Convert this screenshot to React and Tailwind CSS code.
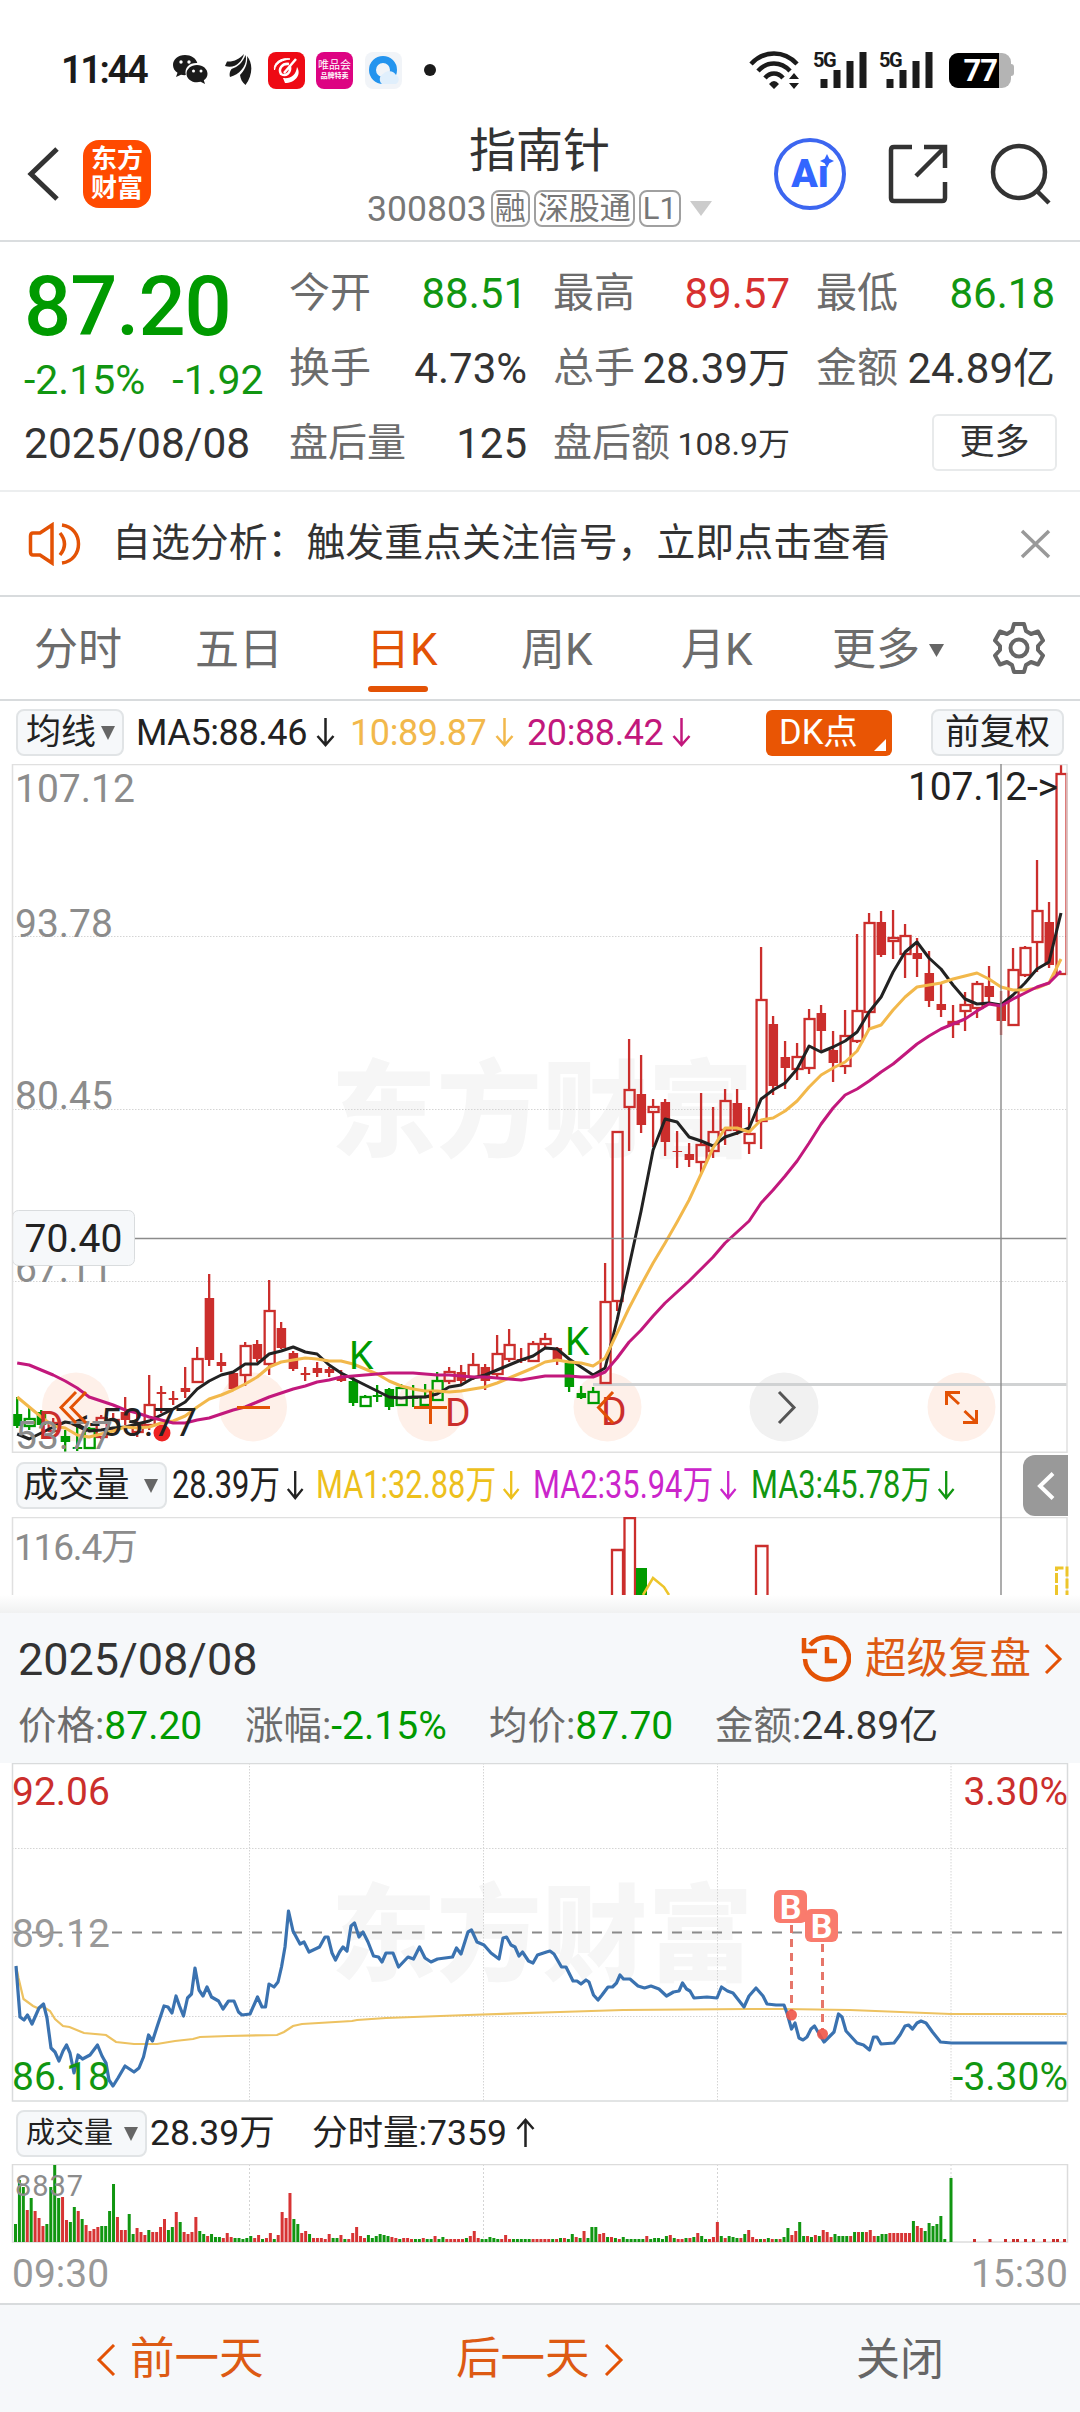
import React from 'react';

const RED = '#cb2e2c';
const GREEN = '#009a00';
const ORANGE = '#e35205';

// [high, bodyTop, bodyBottom, low, type]
// r = filled red, h = hollow red, g = filled green, G = hollow green
const candles = [
  [633, 650, 662, 664, 'g'], [643, 654, 662, 666, 'G'], [646, 648, 661, 663, 'g'], [654, 658, 667, 669, 'h'],
  [666, 672, 678, 690, 'g'], [663, 683, 685, 687, 'g'], [663, 664, 684, 685, 'G'], [651, 653, 673, 675, 'h'],
  [649, 655, 665, 666, 'h'], [633, 648, 656, 661, 'r'], [649, 660, 668, 673, 'h'], [611, 640, 661, 666, 'h'],
  [622, 628, 630, 649, 'r'], [627, 634, 636, 641, 'r'], [603, 624, 628, 634, 'r'], [583, 594, 618, 618, 'h'],
  [510, 534, 596, 602, 'r'], [589, 598, 602, 608, 'r'], [609, 609, 625, 625, 'r'], [578, 581, 611, 622, 'h'],
  [576, 580, 595, 598, 'r'], [516, 546, 600, 611, 'h'], [558, 564, 584, 585, 'r'], [587, 589, 605, 607, 'r'],
  [603, 609, 611, 617, 'r'], [598, 604, 609, 613, 'r'], [603, 605, 609, 613, 'r'], [606, 613, 617, 618, 'r'],
  [611, 617, 639, 642, 'g'], [631, 632, 642, 643, 'G'], [621, 631, 633, 638, 'g'], [624, 625, 643, 646, 'g'],
  [620, 623, 641, 642, 'G'], [621, 633, 635, 643, 'g'], [620, 632, 641, 643, 'G'], [608, 616, 636, 637, 'G'],
  [603, 607, 617, 620, 'h'], [601, 608, 617, 620, 'r'], [589, 600, 613, 616, 'h'], [600, 603, 617, 626, 'r'],
  [571, 589, 610, 613, 'h'], [565, 580, 595, 598, 'h'], [584, 595, 597, 599, 'r'], [577, 579, 597, 598, 'h'],
  [569, 574, 580, 583, 'h'], [583, 584, 596, 601, 'r'], [596, 599, 623, 628, 'g'], [622, 629, 634, 635, 'g'],
  [623, 627, 639, 640, 'G'], [499, 537, 619, 619, 'h'], [367, 367, 537, 547, 'h'], [275, 325, 343, 387, 'h'],
  [291, 330, 361, 369, 'r'], [335, 342, 348, 383, 'h'], [335, 338, 378, 392, 'r'], [367, 387, 388, 404, 'r'],
  [379, 390, 396, 403, 'r'], [329, 380, 398, 409, 'h'], [343, 367, 387, 394, 'h'], [325, 336, 366, 381, 'h'],
  [325, 339, 367, 371, 'r'], [343, 369, 379, 390, 'h'], [183, 235, 357, 385, 'h'], [252, 260, 322, 331, 'r'],
  [277, 293, 304, 325, 'r'], [279, 292, 305, 316, 'h'], [245, 254, 304, 310, 'h'], [241, 249, 267, 286, 'r'],
  [267, 286, 299, 318, 'r'], [246, 271, 302, 310, 'h'], [170, 246, 277, 279, 'h'], [149, 158, 248, 266, 'h'],
  [147, 158, 191, 193, 'r'], [146, 173, 177, 195, 'h'], [160, 171, 190, 214, 'h'], [174, 189, 195, 213, 'r'],
  [187, 209, 237, 243, 'r'], [219, 240, 246, 253, 'r'], [241, 257, 260, 274, 'h'], [228, 240, 247, 267, 'h'],
  [217, 219, 244, 254, 'h'], [202, 222, 233, 239, 'r'], [227, 241, 257, 271, 'r'], [184, 205, 261, 262, 'h'],
  [182, 183, 211, 213, 'h'], [96, 146, 178, 208, 'h'], [138, 158, 201, 204, 'r'], [0, 9, 210, 210, 'h'],
];

const ma5 = [
  670, 675, 669, 663, 658, 660, 667, 666, 664, 663, 660, 657, 651, 645, 638, 625, 617, 611, 608, 600, 600, 590, 587, 583, 588, 590, 601, 609, 615, 621,
  627, 633, 634, 633, 633, 630, 623, 621, 614, 611, 606, 601, 596, 592, 584, 585, 595, 603, 611, 604, 556, 502, 447, 386, 355, 358, 373, 377, 382, 373,
  369, 364, 335, 326, 319, 305, 282, 288, 283, 277, 268, 248, 233, 208, 188, 178, 194, 205, 221, 235, 240, 239, 241, 231, 219, 205, 198, 149,
];
const ma10 = [
  633, 643, 653, 662, 664, 671, 673, 670, 667, 663, 664, 663, 659, 657, 652, 643, 635, 631, 626, 620, 613, 603, 598, 596, 594, 595, 597, 597, 600, 605,
  610, 617, 622, 625, 627, 627, 628, 627, 625, 623, 619, 614, 609, 604, 598, 596, 598, 599, 602, 594, 569, 544, 521, 499, 479, 458, 436, 410, 384, 364,
  364, 368, 356, 354, 347, 337, 323, 311, 304, 298, 287, 265, 261, 246, 233, 223, 221, 219, 215, 212, 209, 215, 223, 226, 226, 224, 219, 195,
];
const ma20 = [
  599, 601, 606, 611, 617, 624, 633, 637, 641, 646, 649, 653, 656, 659, 659, 656, 654, 650, 646, 643, 638, 633, 629, 625, 622, 618, 616, 613, 612, 611,
  610, 609, 609, 609, 610, 611, 611, 612, 613, 613, 614, 615, 616, 614, 612, 612, 612, 613, 613, 608, 594, 578, 566, 552, 539, 528, 517, 505, 493, 479,
  468, 457, 439, 426, 412, 397, 379, 360, 344, 331, 325, 317, 308, 300, 290, 280, 272, 265, 260, 255, 247, 240, 242, 235, 229, 223, 219, 207,
];

const cx = (i) => 17.2 + i * 11.998;
const maPoints = (list) => list.map((y, i) => `${cx(i).toFixed(1)},${y}`).join(' ');

const pricePoints =
  '16,203 20,254 24,257 27.5,252 32,261 39,245 43.5,241 47,255 51,285 55,289 59,298 63,288 66.5,282 70,290 74,310 78,292 82.5,296 90,292 97.5,282 102,293 106,300 109,317 113,323 118,315 125,303 134,309 139,305 143.5,294 148.5,272 152.5,278 157,264 164,243 168,244 172,250 176,233 179.5,243 183.5,253 187.5,235 191.5,231 195,205 199,227 203,233 207,224 211.5,234 218.5,238 223,246 228.5,238 234,238 238.5,249 242,252 250,251 257.5,234 262,244 265.5,244 269,221 274,224 278,219 281.5,204 285,184 288.5,148 293,168 300,181 304,179 309,189 319.5,184 325,174 328,174 332,190 335.5,197 339.5,189 343,184 347,188 351,163 354.5,160 359,174 363,169 368,179 373.5,193 378.5,194 382,199 386,190 393,190 398.5,204 408,194 413.5,196 419.5,184 425,195 431,199 437.5,196 452.5,194 456.5,185 461,191 468,169 471.5,167 477,179 484,182 491,190 499,196 503,175 506.5,174 511,182 515,184 519,193 522.5,189 528.5,198 533,200 537.5,192 546.5,189 550,188 554,191 561.5,204 566,204 573,218 577,218 581,221 586,217 589,219 593.5,232 598,237 602,232 608,224 612.5,224 616.5,220 620,212 623.5,216 630,216 638,223 644.5,225 651,223 659,226 666.5,233 673.5,229 679,228 682.5,220 686.5,226 690,228 694,235 707,234 717,235 721.5,224 727.5,228 733,230 744,244 749,233 756,225 763,233 767,241 776,242 784,242 787,250 791.5,266 795,260 799,275 803,277 807,274 811,266 814.5,263 818,269 824,279 829,274 834,269 838.5,251 842,254 846,268 851.5,274 857,280 863.5,282 869.5,287 873.5,274 877,274 881,281 894,280 900,272 905,263 908.5,262 912.5,266 917,260 921,258 926,260 932.5,269 940.5,279 951.5,280 1067,280';
const avgPoints =
  '16,203 18.5,215 23.5,236 33,243 37.5,245 43.5,244 50,248 55,256 63,263 69.5,264 84,270 106,272 116,279 134,281 157,281 175,278 193,276 200,274 228.5,273 277,272 284,269 293,263 302,261 352,258 357,257 386,255 468,252 560,249 623,247 747,246 784,246 850,247 951,251 1067,251';

// minute volume, bar height then colour
const minuteVolume = (
  '18g 62g 55g 32r 44g 31r 24r 16r 18g 55g 77g 44g 45r 22r 20g 35g 31r 23g 17r 11r 13r 15r 16g 16g 31g 58g 25r 12r 12r 28g ' +
  '8g 14r 10r 7r 12g 10r 10r 15r 23r 12g 15g 30r 20g 10r 8r 10r 25r 11g 8g 6r 8g 5g 5g 4r 9r 5r 4g 4g 3g 4g ' +
  '6g 4r 7r 3g 4r 9r 3g 7r 30r 24r 49r 23g 18g 9r 11r 8g 4r 4r 4r 3r 8r 4g 4g 7r 3g 3r 9r 15r 6r 4r ' +
  '7g 4g 6g 8g 7g 6g 5r 4r 3g 4r 4r 3r 3g 3g 4r 3g 3g 6r 3g 5g 3r 3r 3r 3r 3r 4g 6r 11r 4r 3g ' +
  '3g 5g 4g 3g 3r 7r 3r 3g 3g 3g 3g 3g 3r 3r 3r 3r 3r 3g 3r 4g 4r 3g 8g 5r 4g 11r 4g 15g 15g 8r ' +
  '9r 5g 5r 4g 3r 5g 3g 3g 3g 3g 3g 6r 3g 4g 4g 3g 6g 7r 4g 3r 3r 4g 4r 5g 9r 6g 3g 3r 5r 20r ' +
  '6g 4r 6g 5g 4g 4r 8g 12r 5r 3r 3g 3r 4g 3r 3g 3r 5g 14g 7r 11r 20g 6g 6r 5g 7r 6g 12r 10r 5r 8g ' +
  '6g 6g 6g 6r 10g 10r 10g 10r 12r 6r 6g 8g 8g 9r 9r 9r 9r 9r 9r 21g 16r 14r 11g 19g 16g 18g 26g 3g'
).split(' ');
const afterHours = [974, 989.5, 1005, 1013, 1017, 1025, 1033, 1044, 1053, 1057, 1064];

function Candle({ i, bar }) {
  const [hi, top, bottom, lo, type] = bar;
  const x = cx(i);
  const color = type === 'r' || type === 'h' ? RED : GREEN;
  const hollow = type === 'h' || type === 'G';
  return (
    <g stroke={color} strokeWidth="2.3">
      <path d={`M${x} ${hi}V${top}M${x} ${bottom}V${lo}`} />
      {hollow ? (
        <rect x={x - 4.5} y={top + 1} width="10" height={Math.max(bottom - top - 1, 2)} fill="none" />
      ) : (
        <rect x={x - 4.5} y={top} width="9.5" height={bottom - top} fill={color} stroke="none" />
      )}
    </g>
  );
}

function Watermark({ y }) {
  return (
    <text x="331" y={y} fontFamily="Noto Sans CJK SC" fontSize="105" fontWeight="900" fill="#f6f6f6" textLength="422">
      东方财富
    </text>
  );
}

function KLineChart() {
  return (
    <svg width="1080" height="689" viewBox="0 0 1080 689" className="block" fontFamily="Roboto" fontSize="39">
      <Watermark y={384} />
      <path d="M12 172.5H1067M12 345.5H1067M12 517.5H1067" stroke="#d4d4d4" strokeWidth="1" strokeDasharray="1.5 1.5" />
      <g fill="#8c8c8c">
        <text x="15" y="38">107.12</text>
        <text x="15" y="173">93.78</text>
        <text x="15" y="345">80.45</text>
        <text x="15" y="518">67.11</text>
      </g>
      {[76, 253, 431, 607.5, 961.5].map((x) => (
        <ellipse key={x} cx={x} cy="643" rx="34" ry="34.5" fill="#fef0e9" />
      ))}
      <circle cx="784" cy="643" r="34.5" fill="#f1f1f1" />
      <path d="M593 620.5H1067" stroke="#d0d2d3" strokeWidth="3" />
      {candles.map((bar, i) => (
        <Candle key={i} i={i} bar={bar} />
      ))}
      <circle cx="162" cy="669" r="8.5" fill="#ee2222" />
      <g fill="none" strokeWidth="3" strokeLinejoin="round">
        <polyline points={maPoints(ma5)} stroke="#222" />
        <polyline points={maPoints(ma10)} stroke="#f2b84b" />
        <polyline points={maPoints(ma20)} stroke="#c2187c" />
      </g>
      <g fill={RED}>
        <text x="38" y="675">D</text>
        <text x="445" y="662">D</text>
        <text x="601" y="661">D</text>
      </g>
      <g fill={GREEN}>
        <text x="349" y="605">K</text>
        <text x="565" y="591">K</text>
      </g>
      <text x="70" y="672" fill="#222" textLength="127">&lt;-53.77</text>
      <text x="15" y="685" fill="#8c8c8c">53.77</text>
      <text x="908" y="36" fill="#222" textLength="150">107.12-&gt;</text>
      <g fill="none" stroke={ORANGE} strokeWidth="3">
        <path d="M76 628L61 643.5L76 659M86 628L71 643.5L86 659" />
        <path d="M237 643.5H270M414 643.5H447M430.5 627V660" />
        <path d="M613 628L598.5 643.5L613 659" />
        <path d="M779 628L794 643.5L779 659" stroke="#555" />
        <path d="M946.5 641V628.5H960M946.5 628.5L959 640M976.5 646V658.5H963M976.5 658.5L964.5 647" />
      </g>
      <path d="M12 474.5H1067" stroke="#8b8b8b" strokeWidth="1.5" />
      <rect x="12.5" y="446.5" width="122" height="55" rx="6" fill="#f6f8fa" stroke="#d9dcde" />
      <text x="24.5" y="488" fill="#222">70.40</text>
      <path d="M12.5 689V.5H1067V689" fill="none" stroke="#e0e0e0" strokeWidth="1.5" />
      <path d="M12 688.5H1067" stroke="#e0e0e0" strokeWidth="2" />
    </svg>
  );
}

function DayVolumeChart() {
  return (
    <svg width="1080" height="78" viewBox="0 0 1080 78" className="block" fontFamily="Roboto, 'Noto Sans CJK SC'">
      <text x="14" y="43" fontSize="37" fill="#8c8c8c" textLength="124">116.4万</text>
      <path d="M12.5 78V.5H1067V78" fill="none" stroke="#e0e0e0" strokeWidth="1.5" />
      <g fill="none" stroke={RED} strokeWidth="2.3">
        <path d="M612 78V33H623V78" />
        <path d="M624.5 78V1H635V78" />
        <path d="M756 78V29H767.5V78" />
      </g>
      <rect x="636" y="51" width="11" height="27" fill={GREEN} />
      <path d="M643 78L653 61L664 70L669 78" fill="none" stroke="#edc52b" strokeWidth="2.5" />
      <path d="M1056.5 78V51H1067V78" fill="none" stroke="#edc52b" strokeWidth="3" strokeDasharray="10 2" />
    </svg>
  );
}

function BuyMark({ x, y, dotY }) {
  return (
    <g>
      <path d={`M${x + 17.5} ${y + 35}V${dotY - 4}`} stroke="#e6766a" strokeWidth="3" strokeDasharray="8 6" />
      <circle cx={x + 17.5} cy={dotY} r="5.5" fill="#ef5548" fillOpacity=".9" />
      <rect x={x} y={y} width="33" height="33" rx="6" fill="#f97b6d" />
      <text x={x + 16.5} y={y + 28.5} textAnchor="middle" fontSize="34" fontWeight="700" fill="#fff">B</text>
    </g>
  );
}

function MinuteChart() {
  return (
    <svg width="1080" height="339" viewBox="0 0 1080 339" className="block" fontFamily="Roboto" fontSize="39">
      <Watermark y={209} />
      <path
        d="M249.5 0V338M483.5 0V338M717.5 0V338M951 0V338M12 85.5H1067M12 253.5H1067"
        stroke="#d4d4d4"
        strokeDasharray="1.5 1.5"
      />
      <path d="M12 169.5H1067" stroke="#8a8a8a" strokeWidth="2" strokeDasharray="10 10" />
      <text x="12" y="184" fill="#999">89.12</text>
      <polyline points={avgPoints} fill="none" stroke="#edc261" strokeWidth="2.2" />
      <polyline points={pricePoints} fill="none" stroke="#3a72b0" strokeWidth="3.2" strokeLinejoin="round" />
      <text x="12" y="42" fill={RED}>92.06</text>
      <text x="1068" y="42" fill={RED} textAnchor="end">3.30%</text>
      <text x="12" y="327" fill="#119611">86.18</text>
      <text x="1068" y="327" fill="#119611" textAnchor="end">-3.30%</text>
      <BuyMark x={774} y={127} dotY={252} />
      <BuyMark x={805} y={146} dotY={271} />
      <rect x="12.5" y=".5" width="1055" height="337.5" fill="none" stroke="#d9dbdc" strokeWidth="1.5" />
    </svg>
  );
}

function MinuteVolumeChart() {
  return (
    <svg width="1080" height="79" viewBox="0 0 1080 79" className="block" fontFamily="Roboto">
      <path d="M249.5 0V78M483.5 0V78M717.5 0V78M951 0V78" stroke="#d4d4d4" strokeDasharray="2 2" />
      <rect x="12.5" y=".5" width="1055" height="77.5" fill="none" stroke="#dcdcdc" strokeWidth="1.5" />
      {minuteVolume.map((v, i) => {
        const h = parseInt(v, 10);
        return <rect key={i} x={14 + i * 3.921} y={78 - h} width="3" height={h} fill={v.endsWith('r') ? '#d73434' : '#119611'} />;
      })}
      <rect x="949.5" y="14" width="3" height="64" fill="#119611" />
      {afterHours.map((x) => (
        <rect key={x} x={x - 1} y="75" width="3" height="3" fill={RED} />
      ))}
      <text x="15" y="32" fontSize="29" fill="#8c8c8c" textLength="68">8837</text>
    </svg>
  );
}

function StatusBar() {
  return (
    <div className="flex h-[108px] items-center pt-[32px] pl-[61px] pr-[66px] text-[#1b1b1b]">
      <span className="w-[111px] text-[38px] font-semibold tracking-[-2.4px] leading-none">11:44</span>
      <svg width="36" height="32" viewBox="0 0 36 32">
        <path d="M13 1C5.8 1 1 5.6 1 11c0 3.3 1.7 6 4.5 7.8L4 23l5-2.3c1.5.4 3 .5 4.8.4C12 13 18 8.5 25.3 9 24 4 19 1 13 1z" fill="#1b1b1b" />
        <path d="M25 11c-6 0-10.5 4-10.5 8.7S19 28.3 25 28.3c1.3 0 2.4-.2 3.6-.5L33 30l-1.2-3.7c2.3-1.6 3.7-3.9 3.7-6.6C35.5 15 31 11 25 11z" fill="#1b1b1b" />
        <circle cx="9" cy="8" r="1.7" fill="#fff" /><circle cx="17" cy="8" r="1.7" fill="#fff" />
        <circle cx="21.5" cy="17" r="1.5" fill="#fff" /><circle cx="29" cy="17" r="1.5" fill="#fff" />
      </svg>
      {/* three fanned feathers */}
      <svg className="ml-[17px]" width="27" height="32" viewBox="0 0 27 32">
        <path d="M0 12L2 7.5C9 8 14 5 19 0C17 8 10 15 0 12zM5 23C4 20 5 17 6.5 15C13 13 18 8 20.5 1C23 10 16 20 5 23zM20.5 31C17 28 15.5 25 15 21C20 16 23 9 22 2C28 9 28 21 20.5 31z" fill="#1b1b1b" />
      </svg>
      <svg className="ml-[16px]" width="37" height="37" viewBox="0 0 37 37">
        <rect width="37" height="37" rx="8" fill="#ee0a14" />
        <path d="M22 7C13 5 5 11 6.5 18C8 11 14 8 22 7z" fill="#fff" stroke="#fff" />
        <path d="M21 12C14 11 10 17 13 22C18 25 23 21 22 14M28 7L16 21" fill="none" stroke="#fff" strokeWidth="2.5" />
        <path d="M29 15C34 23 27 31 17 31L15 26C23 27 28 23 29 15z" fill="#fff" />
      </svg>
      <div className="ml-[11px] flex h-[37px] w-[37px] flex-col items-center justify-center rounded-lg bg-[#dd0382] text-white">
        <span className="text-[11px] leading-[12px]">唯品会</span>
        <span className="text-[7px] font-bold leading-[9px]">品牌特卖</span>
      </div>
      <svg className="ml-[12px]" width="37" height="37" viewBox="0 0 37 37">
        <rect width="37" height="37" rx="8" fill="#f1f4f8" />
        <circle cx="18" cy="18" r="10.5" fill="none" stroke="#2494ee" strokeWidth="7" />
        <path d="M17 32a6 6 0 0 1 1-10 8 8 0 0 1 13 1 5 5 0 0 1 0 9z" fill="#e0effc" />
      </svg>
      <span className="ml-[22px] h-3 w-3 rounded-full bg-[#1b1b1b]" />
      <svg className="ml-auto" width="52" height="38" viewBox="0 0 52 38">
        <g fill="none" stroke="#1b1b1b" strokeWidth="4.5">
          <path d="M2 13C15-1 35-1 48 13M9 20C18 10 32 10 41 20M16 27c5-6 13-6 18 0" />
        </g>
        <path d="M20 33q5-6 10 0l-5 5zM40 28l5-6 5 6zM40 32l5 6 5-6z" fill="#1b1b1b" />
      </svg>
      {[0, 1].map((n) => (
        <div key={n} className="relative ml-[12px] h-[38px] w-[54px]">
          <span className="absolute left-0 top-[-1px] text-[20px] font-bold leading-none tracking-[-1.5px]">5G</span>
          <svg width="54" height="38" viewBox="0 0 54 38">
            <path d="M11 28V37M24 19V37M37 10V37M50 1V37" stroke="#1b1b1b" strokeWidth="7" />
          </svg>
        </div>
      ))}
      <div className="ml-[16px] flex items-center">
        <div className="flex h-[35px] w-[62px] rounded-[9px] bg-[#b4b4b4]">
          <div className="flex w-[50px] items-center justify-end rounded-l-[9px] bg-black pr-[2px] text-[31px] font-bold leading-none tracking-[-1px] text-white">77</div>
        </div>
        <div className="h-[12px] w-[3px] rounded-r bg-[#b4b4b4]" />
      </div>
    </div>
  );
}

function Tag({ children }) {
  return (
    <span className="flex h-[37px] shrink-0 items-center whitespace-nowrap rounded-lg border-2 border-[#a0a0a0] px-[2px] text-[31px]">
      {children}
    </span>
  );
}

function Header() {
  return (
    <div className="flex h-[134px] items-center border-b-2 border-[#dadddf] pl-[26px] pr-[28px]">
      <div className="flex w-[340px] items-center">
        <svg width="34" height="56" viewBox="0 0 34 56" fill="none" stroke="#333" strokeWidth="5">
          <path d="M31 3L5 28L31 53" />
        </svg>
        <div className="ml-[23px] flex h-[68px] w-[68px] flex-col items-center justify-center rounded-2xl bg-[#ff4a00] text-[26px] font-bold leading-[29px] text-white">
          <span>东方</span>
          <span>财富</span>
        </div>
      </div>
      <div className="flex w-[347px] flex-col items-center pt-[4px]">
        <span className="text-[47px] leading-[52px] text-[#333]">指南针</span>
        <div className="mt-[13px] flex items-center gap-[4px] text-[35.5px] leading-[36px] text-[#777]">
          <span>300803</span>
          <Tag>融</Tag>
          <Tag>深股通</Tag>
          <Tag>L1</Tag>
          <svg className="ml-[5px] shrink-0" width="22" height="15" viewBox="0 0 22 15">
            <path d="M0 0H22L11 15z" fill="#ccc" />
          </svg>
        </div>
      </div>
      <div className="ml-auto flex items-center">
        <div className="relative flex h-[72px] w-[72px] items-center justify-center rounded-full border-4 border-[#3c66f0] text-[39px] font-black text-[#3366ff]">
          <span>Aı</span>
          <svg className="absolute left-[42px] top-[12px]" width="14" height="14" viewBox="0 0 12 12">
            <path d="M6 0L8 4L12 6L8 8L6 12L4 8L0 6L4 4z" fill="#3366ff" />
          </svg>
        </div>
        <svg className="ml-[42px]" width="60" height="60" viewBox="0 0 60 60" fill="none" stroke="#333" strokeWidth="4.5">
          <path d="M24 3H6Q3 3 3 6V54Q3 57 6 57H54Q57 57 57 54V38M36 3H57V24M57 3L28 32" />
        </svg>
        <svg className="ml-[42px]" width="62" height="62" viewBox="0 0 62 62" fill="none" stroke="#333" strokeWidth="4.5">
          <circle cx="29" cy="29" r="26" />
          <path d="M47 48L59 60" />
        </svg>
      </div>
    </div>
  );
}

function Field({ label, value, color = 'text-[#333]', small }) {
  return (
    <div className="flex items-center justify-between whitespace-nowrap">
      <span className={small ? 'text-[39px] text-[#6c6c6c]' : 'text-[41px] text-[#6c6c6c]'}>{label}</span>
      <span className={`${color} ${small === 'xs' ? 'text-[32px]' : 'text-[42px]'}`}>{value}</span>
    </div>
  );
}

function Quote() {
  return (
    <div className="flex h-[250px] border-b-2 border-[#eceeef] pl-[24px] pr-[24px] pt-[14px] leading-none">
      <div className="w-[265px] text-[#119611]">
        <div className="h-[88px] pt-[7px] text-[83px] font-medium leading-[88px] tracking-[-1px] text-[#009a00]">87.20</div>
        <div className="mt-[15px] flex h-[42px] items-center gap-[27px] whitespace-nowrap text-[41px]">
          <span>-2.15%</span>
          <span>-1.92</span>
        </div>
        <div className="mt-[21px] flex h-[44px] items-center text-[42.5px] text-[#333]">2025/08/08</div>
      </div>
      <div className="grid flex-1 grid-cols-[238px_237px_239px] grid-rows-[75px_75px_75px] gap-x-[26px]">
        <Field label="今开" value="88.51" color="text-[#119611]" />
        <Field label="最高" value="89.57" color="text-[#d73030]" />
        <Field label="最低" value="86.18" color="text-[#119611]" />
        <Field label="换手" value="4.73%" />
        <Field label="总手" value="28.39万" />
        <Field label="金额" value="24.89亿" />
        <Field label="盘后量" value="125" small="sm" />
        <Field label="盘后额" value="108.9万" small="xs" />
        <div className="flex items-center justify-end">
          <button className="-mr-[2px] mb-[3px] h-[57px] w-[125px] rounded-md border-2 border-[#e8eaeb] text-[35px] text-[#333]">更多</button>
        </div>
      </div>
    </div>
  );
}

function Notice() {
  return (
    <div className="flex h-[105px] items-center border-b-2 border-[#d8dbdd] pl-[28px] pr-[29px]">
      <svg width="54" height="44" viewBox="0 0 54 44" fill="none" stroke={ORANGE} strokeWidth="3.5">
        <path d="M24 3L12 11H5Q2.5 11 2.5 14V30Q2.5 33 5 33H12L24 41zM32 11Q41 22 32 33M34 3C56 6 56 38 34 41" />
      </svg>
      <span className="ml-[30px] whitespace-nowrap text-[38.9px] text-[#333]">自选分析：触发重点关注信号，立即点击查看</span>
      <svg className="ml-auto" width="31" height="30" viewBox="0 0 31 30" stroke="#999" strokeWidth="3.5">
        <path d="M2 2L29 28M29 2L2 28" />
      </svg>
    </div>
  );
}

function Tabs() {
  return (
    <div className="flex h-[104px] items-center border-b-2 border-[#d8dbdd] pl-[34px] pr-[35px] pt-[4px] text-[44px] leading-none text-[#6c6c6c]">
      <span className="w-[161px]">分时</span>
      <span className="w-[171px]">五日</span>
      <span className="relative w-[155px] text-[#e35205]">
        日K
        <i className="absolute left-[2px] top-[58px] h-[6px] w-[60px] rounded bg-[#e35205]" />
      </span>
      <span className="w-[160px]">周K</span>
      <span className="w-[151px]">月K</span>
      <span>更多</span>
      <svg className="ml-[9px]" width="15" height="13" viewBox="0 0 15 13">
        <path d="M0 0H15L7.5 13z" fill="#666" />
      </svg>
      <svg className="mb-[4px] ml-auto" width="52" height="52" viewBox="0 0 52 52" fill="none" stroke="#666" strokeWidth="4" strokeLinejoin="round">
        <path d="M21 2H31L33 9L38 12L45 9.5L50 18.5L45 24V28L50 33.5L45 42.5L38 40L33 43L31 50H21L19 43L14 40L7 42.5L2 33.5L7 28V24L2 18.5L7 9.5L14 12L19 9z" />
        <circle cx="26" cy="26" r="8.5" />
      </svg>
    </div>
  );
}

function Picker({ label, className }) {
  return (
    <button className={`flex h-[47px] items-center rounded-lg border-2 border-[#e1e4e6] bg-[#f6f8fa] leading-none text-[#222] ${className}`}>
      <span>{label}</span>
      <svg width="14" height="14" viewBox="0 0 14 14">
        <path d="M0 0H14L7 14z" fill="#666" />
      </svg>
    </button>
  );
}

// Trend arrow after a number, takes the text colour
function Arrow({ up, wide }) {
  return (
    <svg
      className={wide ? 'ml-[8px] inline-block align-[-2px]' : 'ml-[9px] inline-block align-[-2px]'}
      width={wide ? 22 : 19}
      height="29"
      viewBox="0 0 19 29"
      preserveAspectRatio="none"
      fill="none"
      stroke="currentColor"
      strokeWidth="2.5"
    >
      {up ? <path d="M9.5 29V2M1.5 11L9.5 2L17.5 11" /> : <path d="M9.5 0V27M1.5 18L9.5 27L17.5 18" />}
    </svg>
  );
}

function MaRow() {
  return (
    <div className="flex h-[64px] items-center pl-[16px] pr-[16px] pt-[1px] text-[36px] leading-none">
      <Picker label="均线" className="w-[108px] gap-[5px] pl-[8px] text-[35px]" />
      <span className="ml-[12px] w-[214px] whitespace-nowrap tracking-[-0.4px] text-[#222]">MA5:88.46<Arrow /></span>
      <span className="w-[177px] whitespace-nowrap tracking-[-0.4px] text-[#f2b84b]">10:89.87<Arrow /></span>
      <span className="whitespace-nowrap tracking-[-0.4px] text-[#c2187c]">20:88.42<Arrow /></span>
      <div className="relative ml-auto flex h-[46px] w-[126px] items-center rounded-md bg-[#e95504] pl-[13px] text-[34.5px] text-white">
        DK点
        <svg className="absolute bottom-[5px] right-[6px]" width="12" height="12" viewBox="0 0 12 12">
          <path d="M12 0V12H0z" fill="#fff" />
        </svg>
      </div>
      <button className="ml-[39px] h-[47px] w-[133px] rounded-lg border-2 border-[#e1e4e6] bg-[#f6f8fa] text-[35px] text-[#222]">前复权</button>
    </div>
  );
}

function VolumeRow() {
  return (
    <div className="flex h-[64px] items-center pl-[16px] pt-[1px] text-[38.5px] leading-none">
      <Picker label="成交量" className="w-[151px] gap-[14px] pl-[5px] text-[35.5px]" />
      <span className="ml-[5px] w-[144px] shrink-0 origin-left scale-x-[0.8] whitespace-nowrap text-[#222]">28.39万<Arrow wide /></span>
      <span className="w-[217px] shrink-0 origin-left scale-x-[0.8] whitespace-nowrap text-[#edc01c]">MA1:32.88万<Arrow wide /></span>
      <span className="w-[218px] shrink-0 origin-left scale-x-[0.8] whitespace-nowrap text-[#cb25cb]">MA2:35.94万<Arrow wide /></span>
      <span className="w-[200px] shrink-0 origin-left scale-x-[0.8] whitespace-nowrap text-[#119611]">MA3:45.78万<Arrow wide /></span>
    </div>
  );
}

function Replay() {
  return (
    <div className="flex h-[150px] flex-col bg-[#f6f8fa] pl-[18px] pr-[17px] pt-[18px] leading-none">
      <div className="flex h-[56px] items-center justify-between">
        <span className="text-[45px] text-[#333]">2025/08/08</span>
        <div className="flex items-center text-[41.5px] text-[#dd5a13]">
          <svg width="50" height="50" viewBox="0 0 50 50" fill="none" stroke={ORANGE} strokeWidth="4.5">
            <path d="M4 25A22 21 0 1 0 9 11" />
            <path d="M3 4V17H16M26 13V27H36" />
          </svg>
          <span className="ml-[14px]">超级复盘</span>
          <svg className="ml-[13px]" width="19" height="30" viewBox="0 0 19 30" fill="none" stroke={ORANGE} strokeWidth="3">
            <path d="M2 1L16 15L2 29" />
          </svg>
        </div>
      </div>
      <div className="mt-[19px] flex h-[40px] items-center whitespace-nowrap text-[38.5px] text-[#6c6c6c]">
        <p className="w-[227px]">价格:<span className="text-[39px] text-[#009a00]">87.20</span></p>
        <p className="w-[244px]">涨幅:<span className="text-[39px] text-[#009a00]">-2.15%</span></p>
        <p className="w-[226px]">均价:<span className="text-[39px] text-[#009a00]">87.70</span></p>
        <p>金额:<span className="text-[39px] text-[#333]">24.89亿</span></p>
      </div>
    </div>
  );
}

export default function App() {
  return (
    <div className="h-[2412px] w-[1080px] overflow-hidden bg-white font-['Roboto','Noto_Sans_CJK_SC',sans-serif]">
      <StatusBar />
      <Header />
      <Quote />
      <Notice />
      <Tabs />
      <div className="-mt-px">
        <MaRow />
      </div>

      {/* Daily K line */}
      <div className="relative">
        <KLineChart />
        <VolumeRow />
        <DayVolumeChart />
        <i className="absolute left-[1000px] top-0 h-full w-[2px] bg-[#8a8a8a]/70" />
        <button className="absolute right-[12px] top-[691px] flex h-[61px] w-[45px] items-center justify-center rounded-l-xl bg-[#999]">
          <svg width="18" height="28" viewBox="0 0 18 28" fill="none" stroke="#fff" strokeWidth="4">
            <path d="M16 1.5L3 14L16 26.5" />
          </svg>
        </button>
      </div>
      <div className="h-[18px] bg-linear-to-b from-white to-[#f0f1f1]" />

      {/* Replay of the selected day */}
      <Replay />
      <MinuteChart />
      <div className="flex h-[62px] items-center pl-[16px] pt-[1px] text-[35.5px] leading-none text-[#222]">
        <Picker label="成交量" className="w-[131px] gap-[11px] pl-[8px] text-[29px]" />
        <span className="ml-[3px] w-[162px]">28.39万</span>
        <span>分时量:7359<Arrow up /></span>
      </div>
      <MinuteVolumeChart />
      <div className="flex h-[60px] items-center justify-between px-[12px] pt-[2px] text-[39px] leading-none text-[#999]">
        <span>09:30</span>
        <span>15:30</span>
      </div>

      <div className="flex h-[109px] items-center border-t-2 border-[#d8dbdd] bg-[#f6f8fa] pl-[96px] pt-[2px] text-[44.5px] leading-none text-[#dd5a13]">
        <div className="flex w-[360px] items-center gap-[14px]">
          <svg width="20" height="32" viewBox="0 0 20 32" fill="none" stroke={ORANGE} strokeWidth="3">
            <path d="M18 1L3 16L18 31" />
          </svg>
          前一天
        </div>
        <div className="flex w-[400px] items-center gap-[14px]">
          后一天
          <svg width="20" height="32" viewBox="0 0 20 32" fill="none" stroke={ORANGE} strokeWidth="3">
            <path d="M2 1L17 16L2 31" />
          </svg>
        </div>
        <span className="text-[44px] text-[#666]">关闭</span>
      </div>
    </div>
  );
}
